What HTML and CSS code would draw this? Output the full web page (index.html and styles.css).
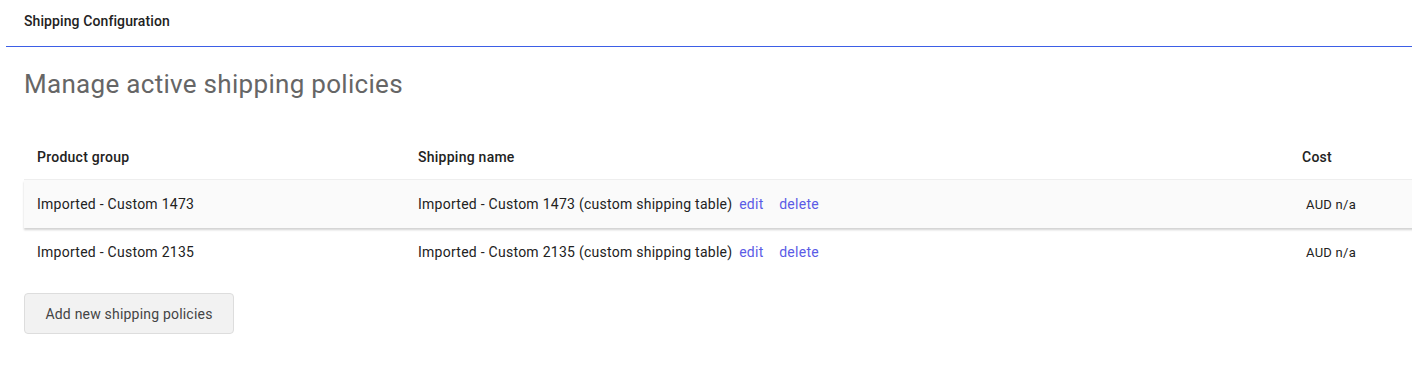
FILE: index.html
```html
<!DOCTYPE html>
<html lang="en">
<head>
    <meta charset="UTF-8">
    <title>Shipping Configuration</title>
    <link rel="stylesheet" href="styles.css">
</head>
<body>
    <div class="page-header">
        <span class="page-title">Shipping Configuration</span>
    </div>

    <div class="content">
        <h1>Manage active shipping policies</h1>

        <table class="policies">
            <thead>
                <tr>
                    <th class="col-group">Product group</th>
                    <th class="col-name">Shipping name</th>
                    <th class="col-cost">Cost</th>
                </tr>
            </thead>
            <tbody>
                <tr class="active">
                    <td>Imported - Custom 1473</td>
                    <td>Imported - Custom 1473 (custom shipping table) <a href="#" class="action">edit</a> <a href="#" class="action">delete</a></td>
                    <td class="cost">AUD n/a</td>
                </tr>
                <tr>
                    <td>Imported - Custom 2135</td>
                    <td>Imported - Custom 2135 (custom shipping table) <a href="#" class="action">edit</a> <a href="#" class="action">delete</a></td>
                    <td class="cost">AUD n/a</td>
                </tr>
            </tbody>
        </table>

        <button class="add-btn">Add new shipping policies</button>
    </div>
</body>
</html>
```

FILE: styles.css
```css
body {
    font-family: Roboto, 'Liberation Sans', sans-serif;
    margin: 0;
    background-color: #fff;
    color: #222;
}

.page-header {
    margin-left: 6px;
    padding: 11px 18px 0;
    height: 35px;
    border-bottom: 1px solid #3d5ee6;
}

.page-title {
    font-size: 14px;
    font-weight: 500;
    letter-spacing: 0.1px;
    color: #222;
}

.content {
    padding: 0 24px;
}

h1 {
    font-size: 26px;
    font-weight: 400;
    letter-spacing: 0.3px;
    color: #666;
    margin: 22px 0 35px;
}

.policies {
    width: 1400px;
    border-collapse: collapse;
    font-size: 14px;
    letter-spacing: 0.26px;
}

.policies th {
    text-align: left;
    font-weight: 500;
    letter-spacing: 0.25px;
    height: 45px;
    padding: 0 13px;
}

.policies td {
    height: 48px;
    padding: 0 13px;
}

.col-group {
    width: 355px;
}

.col-name {
    width: 858px;
}

.policies tr.active {
    background-color: #fafafa;
    border-top: 1px solid #eee;
    box-shadow: 0 2px 2px rgba(0, 0, 0, 0.18);
}

.action {
    color: #5b5be6;
    text-decoration: none;
    margin-left: 3px;
    margin-right: 9px;
}

.cost {
    font-size: 13px;
    padding-left: 17px !important;
}

.add-btn {
    margin-top: 17px;
    font-family: inherit;
    font-size: 14px;
    letter-spacing: 0.2px;
    color: #444;
    background-color: #f2f2f2;
    border: 1px solid #ddd;
    border-radius: 4px;
    padding: 0 18px;
    height: 41px;
    width: 210px;
    cursor: pointer;
}
```
